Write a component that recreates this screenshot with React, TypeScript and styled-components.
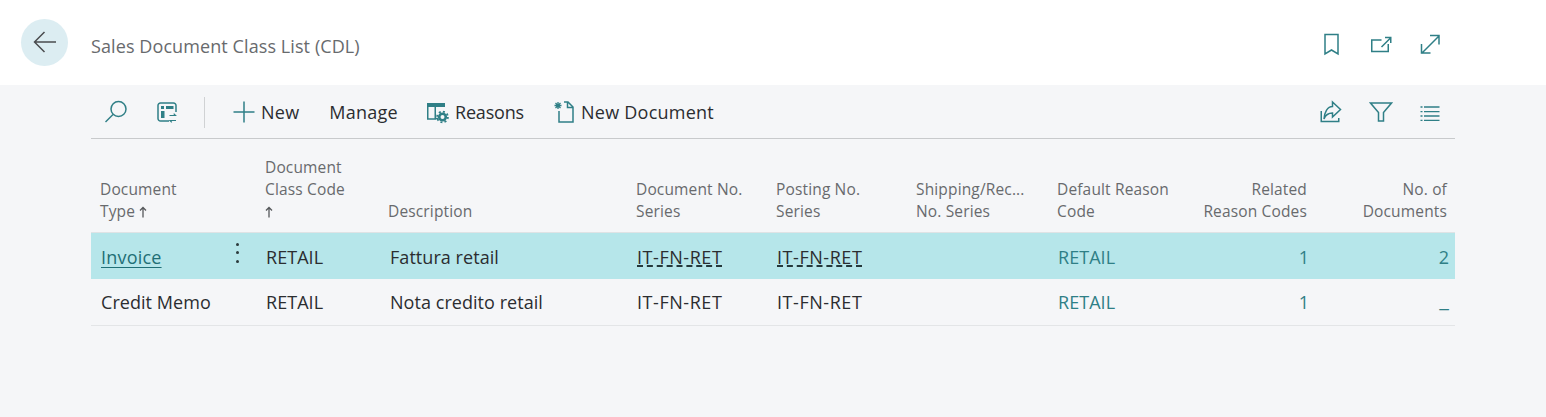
import React from "react";
import styled, { createGlobalStyle } from "styled-components";

const GlobalStyle = createGlobalStyle`
  html, body {
    margin: 0;
    padding: 0;
    background: #f5f6f8;
    font-family: "Open Sans", "Noto Sans", "Liberation Sans", sans-serif;
  }
`;

const TEAL = "#2f7f86";
const COLUMNS = "165px 123px 248px 140px 140px 141px 127px 140px 140px";

const Page = styled.div`
  width: 1546px;
  height: 417px;
  background: #f5f6f8;
  overflow: hidden;
`;

const TitleBar = styled.header`
  display: flex;
  align-items: center;
  height: 85px;
  box-sizing: border-box;
  padding: 0 104px 0 21px;
  background: #fff;
`;

const BackButton = styled.div`
  display: flex;
  align-items: center;
  justify-content: center;
  width: 47px;
  height: 47px;
  margin-top: -1px;
  border-radius: 50%;
  background: #dcedf2;
`;

const Title = styled.h1`
  flex: 1;
  margin: 7px 0 0 23px;
  font-size: 18px;
  font-weight: 400;
  letter-spacing: 0.09px;
  color: #686a6d;
`;

const TitleIcons = styled.div`
  display: flex;
  align-items: center;
  gap: 25px;
  margin-top: 3px;
`;

const Content = styled.main`
  margin: 0 91px;
`;

const Toolbar = styled.div`
  display: flex;
  align-items: center;
  height: 54px;
  box-sizing: border-box;
  padding: 1px 13px 0 13px;
  border-bottom: 1px solid #c8cacc;
`;

const ToolIcon = styled.span<{ $mr?: number }>`
  display: flex;
  margin-right: ${({ $mr }) => $mr ?? 0}px;
`;

const Divider = styled.div`
  width: 1px;
  height: 31px;
  margin: 0 27px 0 25px;
  background: #d0d2d4;
`;

const Action = styled.div<{ $mr: number; $tracking?: number }>`
  display: flex;
  align-items: center;
  gap: 5px;
  margin-right: ${({ $mr }) => $mr}px;
  font-size: 18px;
  letter-spacing: ${({ $tracking }) => $tracking ?? 0.25}px;
  color: #2b2d30;
`;

const Spacer = styled.div`
  flex: 1;
`;

const RightTools = styled.div`
  display: flex;
  align-items: center;
  gap: 25px;
`;

const Row = styled.div<{ $selected?: boolean; $lined?: boolean }>`
  display: grid;
  grid-template-columns: ${COLUMNS};
  align-items: center;
  height: ${({ $lined }) => ($lined ? 47 : 46)}px;
  box-sizing: border-box;
  padding-top: ${({ $selected }) => ($selected ? 1 : 0)}px;
  background: ${({ $selected }) => ($selected ? "#b6e6ea" : "transparent")};
  border-bottom: ${({ $lined }) => ($lined ? "1px solid #e3e5e7" : "0")};
`;

const HeaderRow = styled.div`
  display: grid;
  grid-template-columns: ${COLUMNS};
  align-items: end;
  height: 94px;
  box-sizing: border-box;
  padding-bottom: 10px;
  border-bottom: 1px solid #dfe3e5;
`;

const HeaderCell = styled.div<{ $right?: boolean }>`
  padding: ${({ $right }) => ($right ? "0 8px 0 0" : "0 0 0 9px")};
  text-align: ${({ $right }) => ($right ? "right" : "left")};
  font-size: 15.5px;
  line-height: 22px;
  letter-spacing: 0.15px;
  white-space: nowrap;
  color: #686a6d;
`;

const SortArrow = styled.svg`
  display: inline-block;
  vertical-align: -1px;
`;

const Cell = styled.div<{ $right?: boolean; $teal?: boolean; $pl?: number }>`
  position: relative;
  padding: ${({ $right, $pl }) => ($right ? "0 6px 0 0" : `0 0 0 ${$pl ?? 10}px`)};
  text-align: ${({ $right }) => ($right ? "right" : "left")};
  font-size: 18px;
  letter-spacing: 0.05px;
  white-space: nowrap;
  color: ${({ $teal }) => ($teal ? TEAL : "#2b2d30")};
`;

const RecordLink = styled.span`
  color: #1f6f76;
  letter-spacing: 0.2px;
  text-decoration: underline;
  text-underline-offset: 3px;
  text-decoration-thickness: 1px;
`;

const SeriesNo = styled.span<{ $dashed?: boolean }>`
  letter-spacing: 0.55px;
  text-decoration: ${({ $dashed }) => ($dashed ? "underline dashed 1.5px #24383b" : "none")};
  text-underline-offset: 2px;
`;

const Blank = styled.span`
  display: inline-block;
  padding-bottom: 8px;
  font-size: 22px;
  line-height: 1;
`;

const Dots = styled.span`
  position: absolute;
  top: -2px;
  right: 17px;
  display: flex;
  flex-direction: column;
  gap: 5.5px;
  & > i {
    display: block;
    width: 3px;
    height: 3px;
    border-radius: 50%;
    background: #2b3a3c;
  }
`;

const BackIcon = () => (
  <svg width="24" height="22" viewBox="0 0 24 22" fill="none" stroke="#4a4c4f" strokeWidth="1.5">
    <path d="M23 11H2M11.500 1 1.500 11l10 10" />
  </svg>
);

const Arrow = () => (
  <SortArrow width="8" height="12" viewBox="0 0 8 12" fill="none" stroke="#55585b" strokeWidth="1.300">
    <path d="M4 11.500V1.500M1 4.500l3-3 3 3" />
  </SortArrow>
);

const Icon: React.FC<{ children: React.ReactNode }> = ({ children }) => (
  <svg width="24" height="24" viewBox="0 0 24 24" fill="none" stroke={TEAL} strokeWidth="1.500">
    {children}
  </svg>
);

const columns: { label: React.ReactNode; right?: boolean }[] = [
  { label: <>Document<br />Type <Arrow /></> },
  { label: <>Document<br />Class Code<br /><Arrow /></> },
  { label: "Description" },
  { label: <>Document No.<br />Series</> },
  { label: <>Posting No.<br />Series</> },
  { label: <>Shipping/Rec...<br />No. Series</> },
  { label: <>Default Reason<br />Code</> },
  { label: <>Related<br />Reason Codes</>, right: true },
  { label: <>No. of<br />Documents</>, right: true },
];

export default function App() {
  return (
    <Page>
      <GlobalStyle />
      <TitleBar>
        <BackButton>
          <BackIcon />
        </BackButton>
        <Title>Sales Document Class List (CDL)</Title>
        <TitleIcons>
          <Icon>
            <path d="M5 2.500h13v19.500l-6.500-4-6.500 4z" />
          </Icon>
          <Icon>
            <path d="M12.500 8H2.750v11.500h16.500V12M12.500 15l9-9M16 5.500h5.750V11" />
          </Icon>
          <Icon>
            <path d="M3.500 21.500l17-17M12 3.500h9v9M3.500 12v9h9" />
          </Icon>
        </TitleIcons>
      </TitleBar>
      <Content>
        <Toolbar>
          <ToolIcon $mr={27}>
            <Icon>
              <circle cx="14.500" cy="9" r="7.500" />
              <path d="M9 14.500 1.500 22" />
            </Icon>
          </ToolIcon>
          <ToolIcon>
            <Icon>
              <path d="M14 21H5.500A2.500 2.500 0 0 1 3 18.500v-13A2.500 2.500 0 0 1 5.500 3h13A2.500 2.500 0 0 1 21 5.500V12" />
              <path d="M6 6h3v3H6zM11 6h7.500v3H11zM6 11h3.500v7H6z" fill={TEAL} stroke="none" />
              <path d="M14.500 15.500h6l-1.800-1.800M21 20.500h-6l1.800 1.800" strokeWidth="1.200" />
            </Icon>
          </ToolIcon>
          <Divider />
          <Action $mr={30}>
            <Icon>
              <path d="M12 1.500v21M1.500 12h21" />
            </Icon>
            New
          </Action>
          <Action $mr={28}>Manage</Action>
          <Action $mr={28} $tracking={-0.18}>
            <Icon>
              <path d="M1 3h18v4H1z" fill={TEAL} stroke="none" />
              <path d="M1.750 6v13h7.500V6M9 18.500h3" />
              <circle cx="16.500" cy="17" r="3.300" strokeWidth="2.600" />
              <circle cx="16.500" cy="17" r="5.400" strokeWidth="1.800" strokeDasharray="2 2.200" />
            </Icon>
            Reasons
          </Action>
          <Action $mr={0}>
            <Icon>
              <path d="M7 11v11h14V7l-5-5h-4M15.500 2v5.500H21" />
              <path d="M6 2v7M2.500 5.500h7M3.500 3l5 5M8.500 3l-5 5" strokeWidth="1.300" />
            </Icon>
            New Document
          </Action>
          <Spacer />
          <RightTools>
            <Icon>
              <path d="M1.250 11v10.500h17.500V18M12.500 2l8 7.500-8 7.500v-4c-4 0-7 2-8.500 6 .5-7 3.500-12.500 8.500-12.500z" />
            </Icon>
            <Icon>
              <path d="M1.500 3h21L14.500 12.500V21h-5v-8.500z" />
            </Icon>
            <Icon>
              <path d="M6 7h15.500M6 11.700h15.500M6 16h15.500M6 20.300h15.500M2.500 7h2M2.500 11.700h2M2.500 16h2M2.500 20.300h2" strokeWidth="1.300" />
            </Icon>
          </RightTools>
        </Toolbar>
        <HeaderRow>
          {columns.map((col, i) => (
            <HeaderCell key={i} $right={col.right}>
              {col.label}
            </HeaderCell>
          ))}
        </HeaderRow>
        <Row $selected>
          <Cell>
            <RecordLink>Invoice</RecordLink>
            <Dots>
              <i />
              <i />
              <i />
            </Dots>
          </Cell>
          <Cell>RETAIL</Cell>
          <Cell $pl={11}>Fattura retail</Cell>
          <Cell><SeriesNo $dashed>IT-FN-RET</SeriesNo></Cell>
          <Cell><SeriesNo $dashed>IT-FN-RET</SeriesNo></Cell>
          <Cell />
          <Cell $teal>RETAIL</Cell>
          <Cell $right $teal>1</Cell>
          <Cell $right $teal>2</Cell>
        </Row>
        <Row $lined>
          <Cell>Credit Memo</Cell>
          <Cell>RETAIL</Cell>
          <Cell $pl={11}>Nota credito retail</Cell>
          <Cell><SeriesNo>IT-FN-RET</SeriesNo></Cell>
          <Cell><SeriesNo>IT-FN-RET</SeriesNo></Cell>
          <Cell />
          <Cell $teal>RETAIL</Cell>
          <Cell $right $teal>1</Cell>
          <Cell $right $teal><Blank>_</Blank></Cell>
        </Row>
      </Content>
    </Page>
  );
}
